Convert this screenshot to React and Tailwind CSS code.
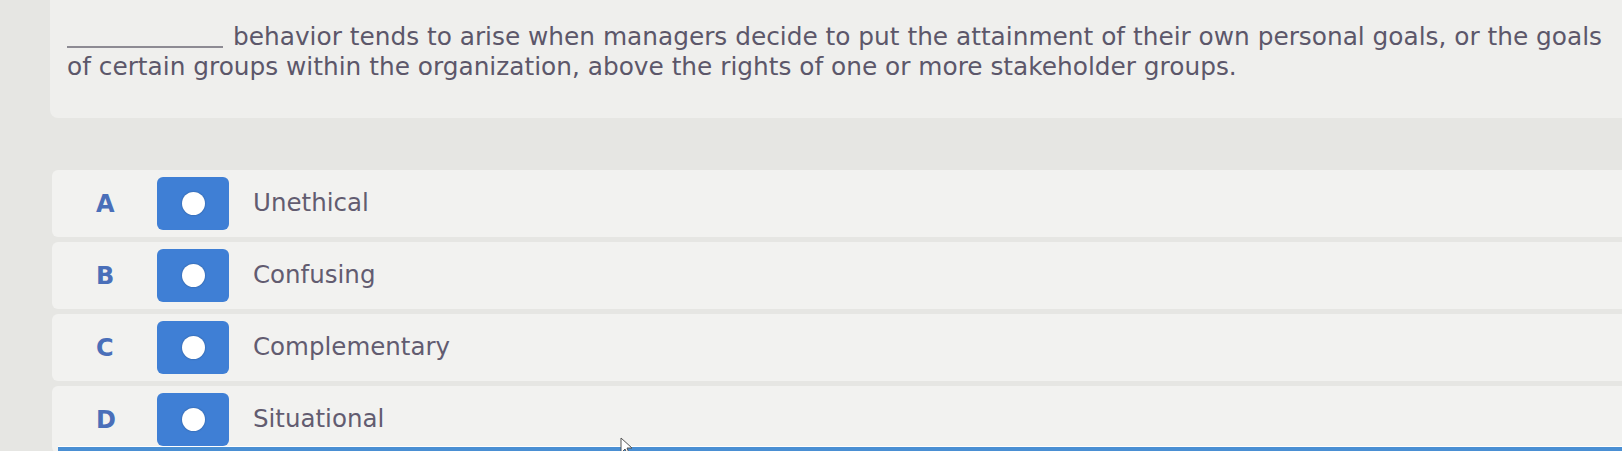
import React from "react";

const options = [
  { letter: "A", text: "Unethical" },
  { letter: "B", text: "Confusing" },
  { letter: "C", text: "Complementary" },
  { letter: "D", text: "Situational" },
];

const font = { fontFamily: '"DejaVu Sans", Verdana, sans-serif' };

const OptionRow = ({ letter, text, last }) => (
  <div
    className={`flex items-center h-[67px] ml-[52px] bg-[#f2f2f0] rounded-l-md ${
      last ? "" : "mb-[5px]"
    }`}
  >
    <div className="w-[105px] pl-[44px] text-[24px] font-bold text-[#4a6fb9]">{letter}</div>
    <div className="flex items-center justify-center w-[72px] h-[53px] rounded-[6px] bg-[#3f7fd5]">
      <div className="w-[23px] h-[23px] rounded-full bg-white shadow-[0_0_2px_rgba(0,0,0,0.35)]"></div>
    </div>
    <div className="pl-[24px] text-[24.5px] text-[#625c70]">{text}</div>
  </div>
);

export default function App() {
  return (
    <div className="relative w-[1622px] h-[451px] overflow-hidden bg-[#e6e6e3]" style={font}>
      {/* Question */}
      <div className="ml-[50px] h-[118px] bg-[#efefed] rounded-bl-lg pl-[17px] pt-[22px]">
        <p className="text-[24.8px] leading-[30px] text-[#5c576a] whitespace-nowrap">
          <span className="inline-block w-[156px] border-b-2 border-[#8d8b93] align-baseline mr-[10px] translate-y-[3px]"></span>
          behavior tends to arise when managers decide to put the attainment of their own personal goals, or the goals
          <br />
          of certain groups within the organization, above the rights of one or more stakeholder groups.
        </p>
      </div>

      {/* Band */}
      <div className="h-[52px]"></div>

      {/* Options */}
      <div>
        {options.map((o, i) => (
          <OptionRow key={o.letter} letter={o.letter} text={o.text} last={i === options.length - 1} />
        ))}
      </div>

      {/* bottom bar */}
      <div className="absolute left-[58px] right-0 bottom-0 h-[5px] bg-[#4a8fd3] border-t border-white"></div>

      {/* cursor */}
      <svg className="absolute left-[620px] top-[437px]" width="14" height="20" viewBox="0 0 14 20">
        <path d="M1 1 L1 16 L5 12 L8 19 L10 18 L7 11 L12 11 Z" fill="#ffffff" stroke="#555" strokeWidth="1" />
      </svg>
    </div>
  );
}
